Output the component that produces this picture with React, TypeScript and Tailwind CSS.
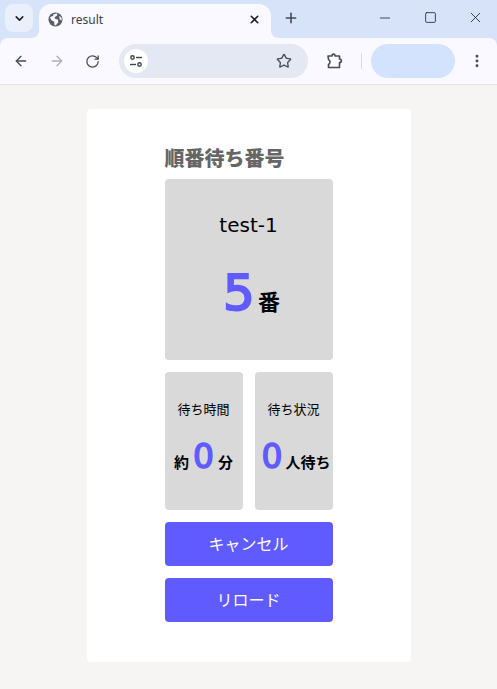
import React from 'react';
import { ArrowLeft, ArrowRight, ChevronDown, Minus, MoreVertical, Plus, RotateCw, Square, Star, X } from 'lucide-react';

const font = { fontFamily: '"Open Sans", "Noto Sans CJK JP", sans-serif' };
const latin = { fontFamily: '"DejaVu Sans", sans-serif' };

const App: React.FC = () => {
  return (
    <div className="flex h-[689px] w-full flex-col overflow-hidden bg-[#f6f5f4]" style={font}>
      <div className="shrink-0 bg-[#d6e3f8]">
        {/* Tab strip */}
        <div className="flex h-[38px]">
          <div className="ml-[5px] mt-1 flex h-[28px] w-[28px] items-center justify-center rounded-lg bg-[#e9effb]">
            <ChevronDown size={13} strokeWidth={3} className="text-[#1f2328]" />
          </div>
          <div className="relative ml-[6px] mt-1 flex h-[34px] w-[232px] items-center rounded-t-xl bg-[#f9f9ff] pb-[3px] pl-[9px] pr-[10px]">
            <svg width="8" height="8" viewBox="0 0 8 8" className="absolute bottom-0 left-[-8px]">
              <path d="M8 0 V8 H0 C5 8 8 5 8 0 Z" fill="#f9f9ff" />
            </svg>
            <svg width="8" height="8" viewBox="0 0 8 8" className="absolute bottom-0 right-[-8px]">
              <path d="M0 0 V8 H8 C3 8 0 5 0 0 Z" fill="#f9f9ff" />
            </svg>
            <svg width="15" height="15" viewBox="0 0 16 16" className="shrink-0">
              <circle cx="8" cy="8" r="7.5" fill="#5a5e66" />
              <path d="M2 5.5 L5.5 4 L6 2 L10 1.5 L9.5 4 L7 5.5 L8 7.5 L10.5 8 L11 11 L8.5 14 L7 14 L6.5 10.5 L3.5 8.5 Z" fill="#f9f9ff" />
              <path d="M12 4 L14.5 6 L14.5 9 L12.5 8 Z" fill="#f9f9ff" />
            </svg>
            <span className="ml-[8px] flex-1 text-[12px] text-[#3b3f46]" style={{ fontFamily: '"Noto Sans", sans-serif' }}>result</span>
            <X size={13} strokeWidth={3} className="text-[#1f2328]" />
          </div>
          <div className="ml-[12px] mt-[10px] h-4 w-4 text-[#444a53]">
            <Plus size={16} strokeWidth={2.4} />
          </div>
          <div className="ml-auto flex">
            <div className="flex w-[46px] items-start justify-center pl-[6px] pt-[10px] text-[#1f2328]"><Minus size={16} strokeWidth={1.2} /></div>
            <div className="flex w-[46px] items-start justify-center pl-[4px] pt-[11px] text-[#1f2328]"><Square size={13} strokeWidth={1.5} /></div>
            <div className="flex w-[46px] items-start justify-center pl-[3px] pt-[9px] text-[#1f2328]"><X size={17} strokeWidth={1.2} /></div>
          </div>
        </div>

        {/* Toolbar */}
        <div className="flex h-[47px] items-center rounded-t-lg border-b border-[#e3e3e8] bg-[#f9f9ff]">
          <ArrowLeft size={16} strokeWidth={2} className="ml-[13px] text-[#474c55]" />
          <ArrowRight size={16} strokeWidth={2} className="ml-[20px] text-[#aeb0b6]" />
          <RotateCw size={15} strokeWidth={2} className="ml-[20px] text-[#474c55]" />
          <div className="ml-[19px] flex h-[34px] w-[189px] items-center justify-between rounded-full bg-[#e4e8f2] pl-[5px] pr-[16px]">
            <div className="flex h-6 w-6 items-center justify-center rounded-full bg-white">
              <svg width="14" height="14" viewBox="0 0 14 14" fill="none" stroke="#3f444c" strokeWidth="1.4">
                <circle cx="3.5" cy="3.5" r="1.7" />
                <path d="M7 3.5 H13" />
                <path d="M1 10.5 H7" />
                <circle cx="10.5" cy="10.5" r="1.7" />
              </svg>
            </div>
            <Star size={16} strokeWidth={2} className="text-[#474c55]" />
          </div>
          <svg width="18" height="18" viewBox="0 0 18 18" fill="none" stroke="#474c55" strokeWidth="1.6" strokeLinejoin="round" className="ml-[18px]">
            <path d="M2 4 H6 C6 1.5 9 1.5 9 4 H13.5 V7 C16 7 16 10.5 13.5 10.5 V15.5 H2.5 V12.5 C4.5 11.5 4.5 8.5 2.5 7.5 Z" />
          </svg>
          <div className="ml-[17px] h-4 w-px bg-[#cfdcf5]" />
          <div className="ml-[9px] h-[34px] w-[84px] rounded-full bg-[#d3e3fd]" />
          <MoreVertical size={16} strokeWidth={2.4} className="ml-[14px] text-[#474c55]" />
        </div>
      </div>

      {/* Page */}
      <div className="flex flex-1 justify-center pt-6">
        <div className="h-[553px] w-[324px] rounded-[4px] bg-white pt-[38px]">
          <div className="mx-auto w-[168px]">
            <h1 className="h-[24px] whitespace-nowrap text-[20px] font-black leading-[24px] text-[#666666]">順番待ち番号</h1>
            <div className="mt-2 flex h-[181px] flex-col items-center rounded-[4px] bg-[#d9d9d9] pt-[32px]">
              <p className="text-[20px] leading-[28px] text-black" style={latin}>test-1</p>
              <p className="ml-[6px] mt-[22px] flex items-baseline leading-[64px]">
                <span className="text-[50px] text-[#5f5bff] [-webkit-text-stroke:2px_#5f5bff]" style={latin}>5</span>
                <span className="ml-[3px] text-[22px] font-bold text-black">番</span>
              </p>
            </div>
            <div className="mt-3 grid grid-cols-2 gap-3">
              <div className="flex h-[138px] flex-col items-center rounded-[4px] bg-[#d9d9d9] pt-[27px]">
                <p className="text-[13px] leading-[20px] text-black">待ち時間</p>
                <p className="mt-[16px] flex items-baseline whitespace-nowrap leading-[44px]">
                  <span className="text-[15px] font-bold text-black">約</span>
                  <span className="mx-[4px] text-[33px] text-[#5f5bff] [-webkit-text-stroke:1.5px_#5f5bff]" style={latin}>0</span>
                  <span className="text-[15px] font-bold text-black">分</span>
                </p>
              </div>
              <div className="flex h-[138px] flex-col items-center rounded-[4px] bg-[#d9d9d9] pt-[27px]">
                <p className="text-[13px] leading-[20px] text-black">待ち状況</p>
                <p className="ml-[5px] mt-[16px] flex items-baseline whitespace-nowrap leading-[44px]">
                  <span className="text-[33px] text-[#5f5bff] [-webkit-text-stroke:1.5px_#5f5bff]" style={latin}>0</span>
                  <span className="ml-[3px] text-[15px] font-bold text-black">人待ち</span>
                </p>
              </div>
            </div>
            <button className="mt-3 flex h-11 w-full items-center justify-center rounded-[4px] bg-[#5f5bff] text-[16px] text-white">キャンセル</button>
            <button className="mt-3 flex h-11 w-full items-center justify-center rounded-[4px] bg-[#5f5bff] text-[16px] text-white">リロード</button>
          </div>
        </div>
      </div>
    </div>
  );
};

export default App;
